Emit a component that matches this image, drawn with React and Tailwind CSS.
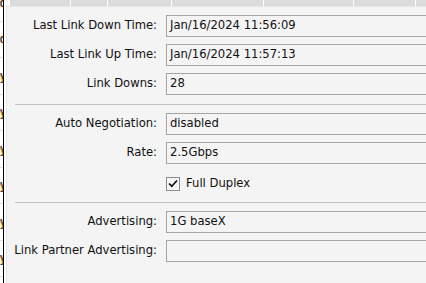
import React from 'react';

const font = { fontFamily: '"DejaVu Sans", Verdana, sans-serif' };

const Field = ({ label, value }) => (
  <div className="flex items-center h-[22px]">
    <div className="w-[142px] shrink-0 flex justify-end whitespace-nowrap text-[11.6px] text-[#111] leading-none">{label}</div>
    <div className="ml-[9px] w-[320px] shrink-0 h-[22px] border border-[#a4a4a4] bg-[#f4f4f4] pl-[3px] flex items-center whitespace-nowrap text-[11.6px] text-[#111] leading-none">
      {value}
    </div>
  </div>
);

const Check = ({ label }) => (
  <div className="flex items-center h-[22px]">
    <div className="w-[142px] shrink-0" />
    <div className="ml-[9px] mt-[3px] w-[14px] h-[14px] border border-[#8c8c8c] bg-[#f6f6f6] flex items-center justify-center">
      <svg width="10" height="9" viewBox="0 0 10 9">
        <path d="M1 4.5 L3.8 7.2 L9 1.5" fill="none" stroke="#111" strokeWidth="1.7" />
      </svg>
    </div>
    <span className="ml-[6px] mt-[3px] text-[11.6px] text-[#111] leading-none">{label}</span>
  </div>
);

const tabs = [61, 37, 64, 92, 90, 62];

export default function App() {
  const stripRows = ['o', 'o', 'y', 'y', 'y', 'y', 'y', 'y', 'y'];

  return (
    <div className="w-[426px] h-[283px] overflow-hidden flex bg-white" style={font}>
      {/* cut-off list on the left */}
      <div className="w-[3px] shrink-0 overflow-hidden flex flex-col">
        <div className="-mt-[15px] flex flex-col">
          {stripRows.map((c, i) => (
            <div key={i} className="h-[36.5px] shrink-0 border-b border-[#e2e2e2] flex items-center justify-end">
              <span className="text-[12px] leading-none text-[#2a2a2a] -mr-[4px]" style={{ textShadow: '-1px 0 #d8902a' }}>{c}</span>
            </div>
          ))}
        </div>
      </div>
      <div className="w-px shrink-0 bg-black" />

      <div className="flex-1 flex flex-col">
        {/* tab bar */}
        <div className="h-[6px] shrink-0 pl-[6px] flex">
          <div className="flex-1 flex bg-[#dcdcdc]">
            {tabs.map((w, i) => (
              <div key={i} className="h-full border-r border-white shrink-0" style={{ width: w }} />
            ))}
          </div>
        </div>

        {/* panel */}
        <div className="flex-1 ml-[2px] border-l border-t border-[#e6e6e6] bg-[#f4f4f4] pl-[8px] pt-[8px]">
          <div className="flex flex-col gap-[7px]">
            <Field label="Last Link Down Time:" value="Jan/16/2024 11:56:09" />
            <Field label="Last Link Up Time:" value="Jan/16/2024 11:57:13" />
            <Field label="Link Downs:" value="28" />
          </div>
          <div className="mt-[9px] mb-[8px] h-px bg-[#c2c2c2]" />
          <div className="flex flex-col gap-[7px]">
            <Field label="Auto Negotiation:" value="disabled" />
            <Field label="Rate:" value="2.5Gbps" />
            <Check label="Full Duplex" />
          </div>
          <div className="mt-[9px] mb-[8px] h-px bg-[#c2c2c2]" />
          <div className="flex flex-col gap-[7px]">
            <Field label="Advertising:" value="1G baseX" />
            <Field label="Link Partner Advertising:" value="" />
          </div>
        </div>
      </div>
    </div>
  );
}
